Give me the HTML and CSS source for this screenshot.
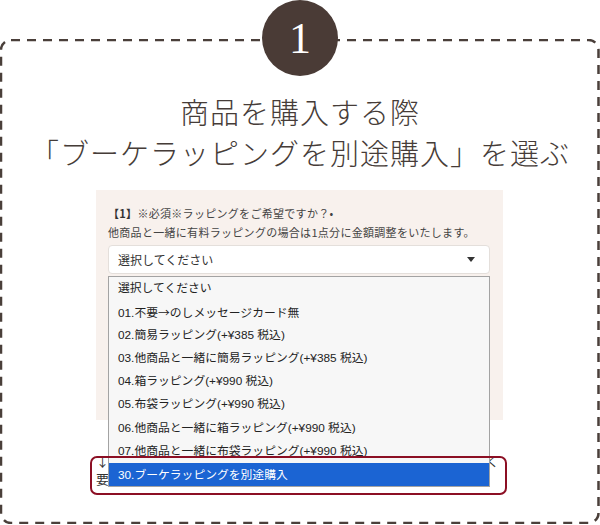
FILE: index.html
```html
<!DOCTYPE html>
<html lang="ja">
<head>
  <meta charset="UTF-8">
  <title>ブーケラッピング</title>
  <link rel="stylesheet" href="styles.css">
</head>
<body>
  <div class="step">
    <div class="badge">1</div>
    <div class="card">
      <svg class="frame" width="600" height="485" viewBox="0 0 600 485">
        <rect x="1" y="1" width="597.5" height="483" rx="10" fill="none" stroke="#4a3f3a" stroke-width="2.5" stroke-dasharray="9 7"/>
      </svg>
      <h1 class="title">商品を購入する際<br>「ブーケラッピングを別途購入」を選ぶ</h1>
      <div class="shot">
        <div class="form">
          <p class="q"><b>【1】</b>※必須※ラッピングをご希望ですか？•</p>
          <p class="note">他商品と一緒に有料ラッピングの場合は1点分に金額調整をいたします。</p>
          <div class="select"><span>選択してください</span><i class="caret"></i></div>
        </div>
        <div class="below">
          <div class="row"><span>↓</span><span>く</span></div>
          <div class="row"><span>要</span></div>
        </div>
        <ul class="options">
          <li>選択してください</li>
          <li>01.不要<span class="arrow">→</span>のしメッセージカード無</li>
          <li>02.簡易ラッピング(+¥385 税込)</li>
          <li>03.他商品と一緒に簡易ラッピング(+¥385 税込)</li>
          <li>04.箱ラッピング(+¥990 税込)</li>
          <li>05.布袋ラッピング(+¥990 税込)</li>
          <li>06.他商品と一緒に箱ラッピング(+¥990 税込)</li>
          <li class="cut">07.他商品と一緒に布袋ラッピング(+¥990 税込)</li>
          <li class="active">30.ブーケラッピングを別途購入</li>
        </ul>
        <div class="mark"></div>
      </div>
    </div>
  </div>
</body>
</html>
```

FILE: styles.css
```css
body {
  margin: 0;
  background: #fff;
  font-family: "Liberation Sans", "Noto Sans CJK JP", sans-serif;
}
.step {
  width: 600px;
  height: 525px;
  overflow: hidden;
}
.badge {
  position: relative;
  z-index: 2;
  width: 76px;
  height: 76px;
  margin: 0 auto;
  border-radius: 50%;
  background: #4a3b36;
  color: #fff;
  font-family: "Liberation Serif", serif;
  font-size: 44px;
  display: flex;
  justify-content: center;
  align-items: center;
}
.card {
  position: relative;
  height: 485px;
  margin-top: -37px;
  padding-top: 52px;
  box-sizing: border-box;
}
.frame {
  position: absolute;
  top: 0;
  left: 0;
}
.title {
  margin: 0;
  font-family: "Noto Sans CJK JP", sans-serif;
  font-weight: 300;
  font-size: 29px;
  line-height: 41px;
  letter-spacing: 1px;
  text-align: center;
  color: #463c38;
}
.shot {
  position: relative;
  width: 407px;
  margin: 17px 0 0 96px;
}
.form {
  height: 230px;
  padding: 14px 13px 0 12px;
  box-sizing: border-box;
  background: #f8f1ed;
  font-family: "Noto Sans CJK JP", sans-serif;
  color: #444;
}
.q, .note {
  margin: 0;
  font-size: 11px;
  line-height: 19px;
  letter-spacing: 0.3px;
  white-space: nowrap;
}
.q b {
  color: #333;
}
.select {
  margin-top: 3px;
  height: 29px;
  padding: 0 14px 0 9px;
  border: 1px solid #e4dfdb;
  border-radius: 4px;
  background: #fff;
  box-sizing: border-box;
  display: flex;
  justify-content: space-between;
  align-items: center;
  font-size: 12px;
  color: #333;
}
.caret {
  width: 0;
  height: 0;
  border-left: 4px solid transparent;
  border-right: 4px solid transparent;
  border-top: 5px solid #333;
}
.below {
  padding: 32px 4px 0 0;
  font-family: "Noto Sans CJK JP", sans-serif;
  font-size: 13px;
  line-height: 18px;
  color: #333;
}
.row {
  display: flex;
  justify-content: space-between;
}
.options {
  position: absolute;
  left: 12px;
  top: 86px;
  width: 382px;
  height: 211px;
  margin: 0;
  padding: 0;
  list-style: none;
  box-sizing: border-box;
  border: 1px solid #a3a3a3;
  background: #f7f7f7;
  overflow: hidden;
  font-size: 11.8px;
  color: #222;
}
.options li {
  height: 23.3px;
  line-height: 23.3px;
  padding-left: 9px;
  white-space: nowrap;
}
.options .arrow {
  font-family: "Noto Sans CJK JP", sans-serif;
}
.options li.cut {
  height: 15.5px;
  overflow: hidden;
  margin-bottom: 7.8px;
}
.options li.active {
  height: 24px;
  line-height: 24px;
  background: #1b64d3;
  color: #fff;
}
.mark {
  position: absolute;
  left: -6px;
  top: 266px;
  width: 417px;
  height: 39px;
  box-sizing: border-box;
  border: 2px solid #8c0f24;
  border-radius: 7px;
}
```
